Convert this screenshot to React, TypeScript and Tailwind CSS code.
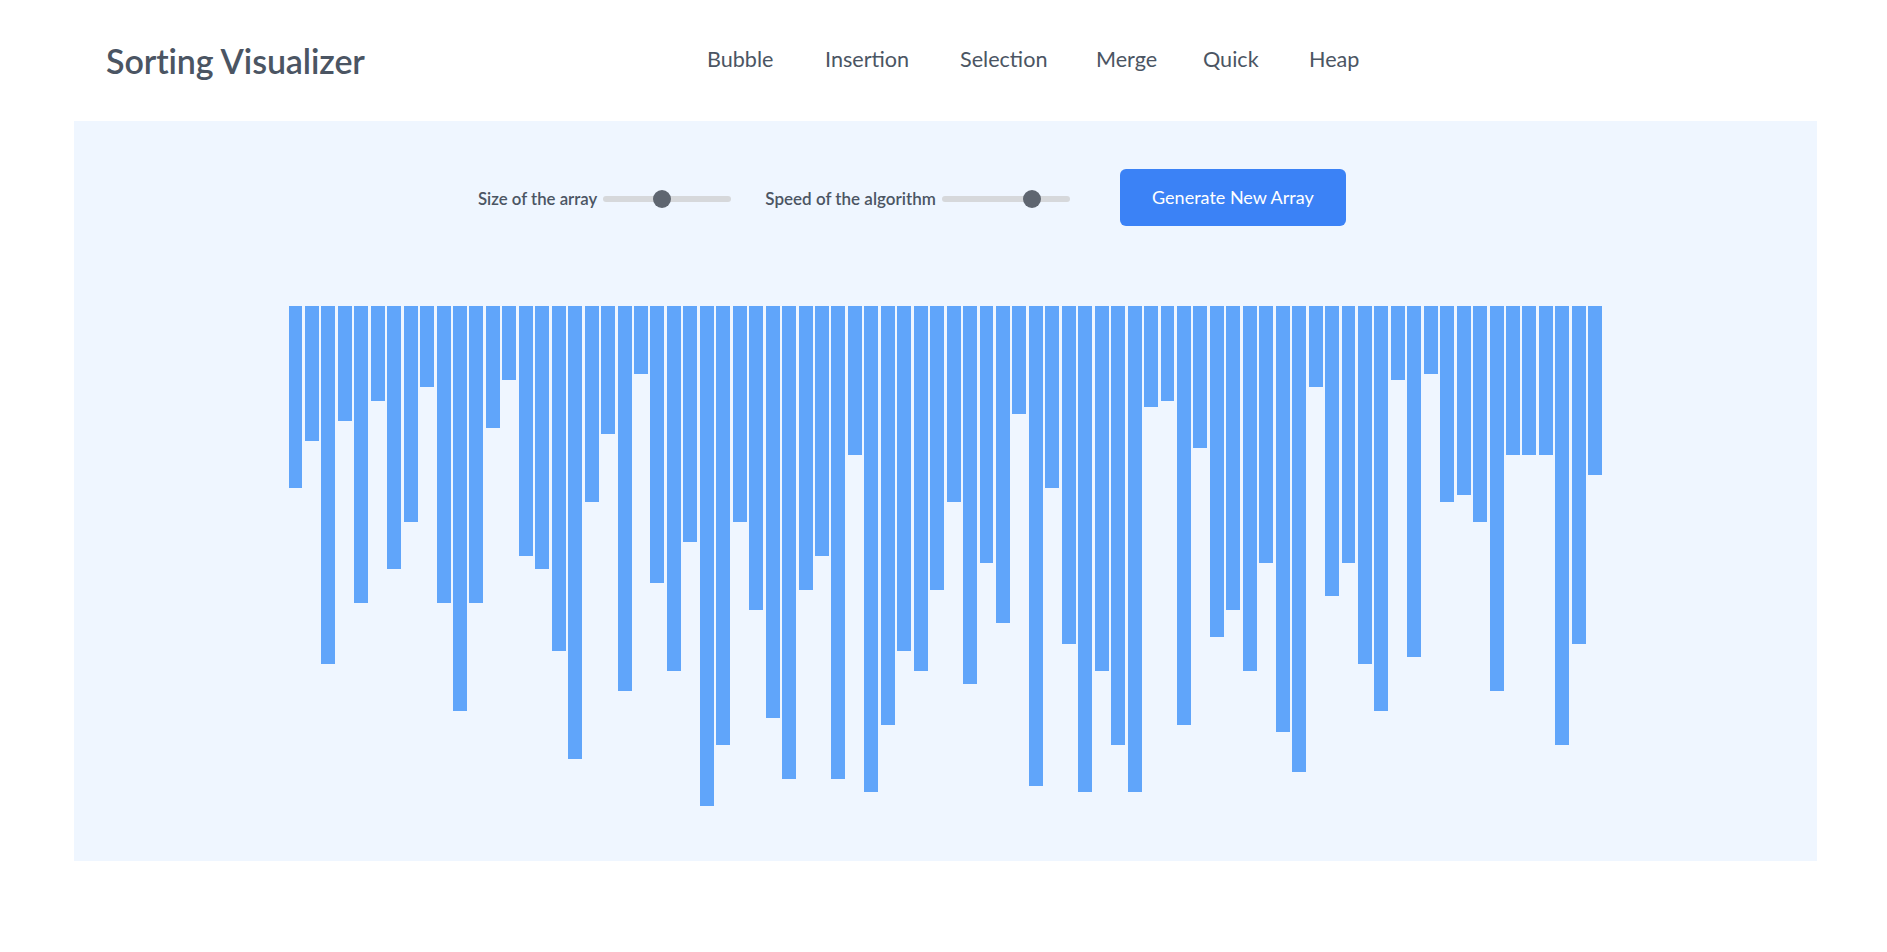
import { useState } from 'react'

// bar heights (px) measured off the current array
const bars = [
  182, 135, 358, 115, 297, 95, 263, 216, 81, 297, 405, 297, 122, 74, 250, 263, 345, 453, 196, 128,
  385, 68, 277, 365, 236, 500, 439, 216, 304, 412, 473, 284, 250, 473, 149, 486, 419, 345, 365, 284,
  196, 378, 257, 317, 108, 480, 182, 338, 486, 365, 439, 486, 101, 95, 419, 142, 331, 304, 365, 257,
  426, 466, 81, 290, 257, 358, 405, 74, 351, 68, 196, 189, 216, 385, 149, 149, 149, 439, 338, 169,
]

const algorithms = [
  { name: 'Bubble', w: 'w-[118px]' },
  { name: 'Insertion', w: 'w-[135px]' },
  { name: 'Selection', w: 'w-[136px]' },
  { name: 'Merge', w: 'w-[107px]' },
  { name: 'Quick', w: 'w-[106px]' },
  { name: 'Heap', w: 'w-[60px]' },
]

const rangeClass =
  'h-[6px] w-[128px] cursor-pointer appearance-none rounded-full bg-[#d6d8db] outline-none ' +
  '[&::-webkit-slider-thumb]:h-[18px] [&::-webkit-slider-thumb]:w-[18px] [&::-webkit-slider-thumb]:appearance-none ' +
  '[&::-webkit-slider-thumb]:rounded-full [&::-webkit-slider-thumb]:bg-[#5f6670]'

export default function App() {
  const [size, setSize] = useState(45)
  const [speed, setSpeed] = useState(74)

  return (
    <div className="min-h-screen bg-white font-['Lato','Liberation_Sans',sans-serif] text-[#4b5563]">
      {/* 顶部导航 */}
      <header className="flex h-[121px] items-center pl-[106px]">
        <h1 className="w-[601px] text-[34px] font-semibold tracking-[-0.1px]">Sorting Visualizer</h1>
        <nav className="-mt-[3px] flex items-center text-[21.6px]">
          {algorithms.map((a) => (
            <button key={a.name} className={`${a.w} cursor-pointer text-left`}>
              {a.name}
            </button>
          ))}
        </nav>
      </header>

      {/* 主面板 */}
      <main className="ml-[74px] mr-[70px] h-[740px] bg-[#eff6ff] pt-[48px]">
        <div className="flex h-[57px] items-center pl-[404px] text-[16.8px] font-semibold">
          <label className="mt-[3px] flex items-center gap-[6px]">
            Size of the array
            <input
              type="range"
              min={0}
              max={100}
              value={size}
              onChange={(e) => setSize(Number(e.target.value))}
              className={rangeClass}
            />
          </label>
          <label className="ml-[34px] mt-[3px] flex items-center gap-[6px] text-[17px]">
            Speed of the algorithm
            <input
              type="range"
              min={0}
              max={100}
              value={speed}
              onChange={(e) => setSpeed(Number(e.target.value))}
              className={rangeClass}
            />
          </label>
          <button className="ml-[50px] h-[57px] w-[226px] cursor-pointer rounded-md bg-[#3b82f6] text-[18px] font-normal text-white">
            Generate New Array
          </button>
        </div>

        <div className="mx-auto mt-[80px] flex h-[500px] w-[1314px] items-start gap-[2.5px]">
          {bars.map((h, i) => (
            <div key={i} className="flex-1 bg-[#60a5fa]" style={{ height: h }} />
          ))}
        </div>
      </main>
    </div>
  )
}
